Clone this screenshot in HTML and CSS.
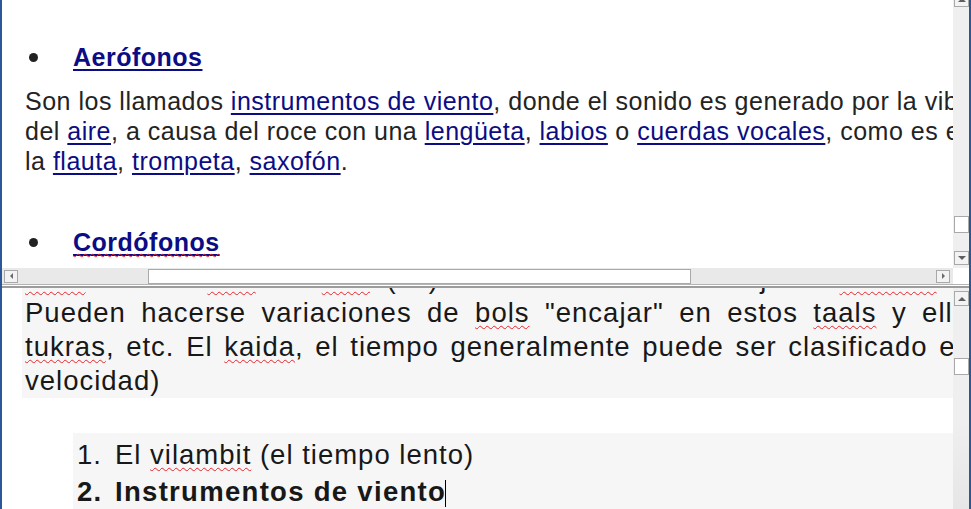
FILE: index.html
```html
<!DOCTYPE html>
<html lang="es">
<head>
<title>Documento - Instrumentos</title>
<meta charset="utf-8">
<meta name="viewport" content="width=device-width, initial-scale=1">
<link rel="stylesheet" href="styles.css">
</head>
<body>

<div class="window">

  <!-- UPPER SPLIT PANE -->
  <div class="pane-top">
    <div class="pane-body">
      <div class="doc doc-top">
        <div class="head"><span class="dot"></span><a class="link">Aerófonos</a></div>
        <div class="para">
          <span class="ln">Son los llamados <a class="link">instrumentos de viento</a>, donde el sonido es generado por la vibración de la columna</span>
          <span class="ln">del <a class="link">aire</a>, a causa del roce con una <a class="link">lengüeta</a>, <a class="link">labios</a> o <a class="link">cuerdas vocales</a>, como es el caso de</span>
          <span class="ln">la <a class="link">flauta</a>, <a class="link">trompeta</a>, <a class="link">saxofón</a>.</span>
        </div>
        <div class="head head-2"><span class="dot"></span><a class="link"><span class="sp sp-link">Cordófonos</span></a></div>
      </div>
      <div class="vscroll vscroll-top">
        <div class="btn btn-up btn-cut"></div>
        <div class="thumb thumb-top"></div>
        <div class="btn btn-down"></div>
      </div>
    </div>
    <div class="hbar">
      <div class="hscroll">
        <div class="btn btn-left"></div>
        <div class="hthumb"></div>
        <div class="btn btn-right"></div>
      </div>
      <div class="corner"></div>
    </div>
  </div>

  <div class="split"></div>

  <!-- LOWER SPLIT PANE -->
  <div class="pane-bottom">
    <div class="doc doc-bottom">
      <div class="para2">
        <span class="ln ws0"><span class="sp">Rela</span> tocado <span class="sp">taal</span> de <span class="sp">tala</span> (tal) en el cual se cada ajusta <span class="sp">Tirakita</span> y ello</span>
        <span class="ln ws1">Pueden hacerse variaciones de <span class="sp">bols</span> "encajar" en estos <span class="sp">taals</span> y ellos son</span>
        <span class="ln ws2"><span class="sp">tukras</span>, etc. El <span class="sp">kaida</span>, el tiempo generalmente puede ser clasificado en</span>
        <span class="ln">velocidad)</span>
      </div>
      <div class="list">
        <div class="item"><span class="num">1.</span>El <span class="sp">vilambit</span> (el tiempo lento)</div>
        <div class="item item-bold"><span class="num">2.</span>Instrumentos de viento<span class="caret"></span></div>
      </div>
    </div>
    <div class="vscroll vscroll-bottom">
      <div class="btn btn-up"></div>
      <div class="thumb thumb-bottom"></div>
    </div>
  </div>

</div>

</body>
</html>
```

FILE: styles.css
```css
* {
  box-sizing: border-box;
}

html, body {
  margin: 0;
  padding: 0;
}

body {
  width: 971px;
  height: 509px;
  overflow: hidden;
  background: #fff;
  font-family: Arial, "Liberation Sans", sans-serif;
}

/* Window frame with the blue edges */
.window {
  height: 509px;
  border-left: 2px solid #2b579a;
  border-right: 2px solid #2b579a;
  display: flex;
  flex-direction: column;
}

/* Upper pane */
.pane-top {
  height: 284px;
  flex: none;
  display: flex;
  flex-direction: column;
}

.pane-body {
  flex: 1;
  min-height: 0;
  display: flex;
}

.doc {
  flex: 1;
  min-width: 0;
  overflow: hidden;
  background: #fff;
}

.ln {
  display: block;
  white-space: nowrap;
}

/* Links in the document */
.link {
  color: #0c0c84;
  text-decoration: underline;
  text-decoration-thickness: 2px;
  text-underline-offset: 3px;
}

/* Spelling squiggle */
.sp {
  text-decoration: underline wavy #e8242a;
  text-decoration-thickness: 1px;
  text-underline-offset: 3px;
}

.sp-link {
  text-underline-offset: 2px;
}

.doc-top {
  padding-top: 42px;
  color: #232323;
  font-size: 25px;
  letter-spacing: 0.5px;
  line-height: 30px;
}

.head {
  display: flex;
  align-items: center;
  padding-left: 27px;
  font-weight: bold;
}

.head-2 {
  margin-top: 51px;
}

.dot {
  width: 9px;
  height: 9px;
  border-radius: 50%;
  background: #222;
  margin-right: 35px;
}

.para {
  margin-top: 14px;
  padding-left: 23px;
}

/* Scrollbars */
.vscroll {
  width: 16px;
  flex: none;
  display: flex;
  flex-direction: column;
  background: #efefef;
}

.btn {
  width: 15px;
  height: 15px;
  margin-left: 1px;
  border: 1px solid #a9a9a9;
  background: #f3f3f3;
  display: flex;
  align-items: center;
  justify-content: center;
  flex: none;
}

.btn::before {
  content: "";
  border: 4px solid transparent;
}

.btn-up::before {
  border-top: 0;
  border-bottom: 4px solid #5e5e5e;
}

.btn-down::before {
  border-bottom: 0;
  border-top: 4px solid #5e5e5e;
}

.btn-left::before {
  border-left: 0;
  border-width: 3px 3px 3px 0;
  border-right: 3px solid #6a6a6a;
}

.btn-right::before {
  border-right: 0;
  border-width: 3px 0 3px 3px;
  border-left: 3px solid #6a6a6a;
}

.btn-cut {
  margin-top: -8px;
}

.thumb {
  width: 15px;
  height: 17px;
  margin-left: 1px;
  border: 1px solid #a9a9a9;
  background: #fff;
  flex: none;
}

.thumb-top {
  margin-top: 209px;
}

.btn-down {
  margin-top: 18px;
  height: 14px;
}

.hbar {
  height: 16px;
  flex: none;
  display: flex;
}

.hscroll {
  flex: 1;
  display: flex;
  align-items: center;
  background: #e9e9e9;
  padding: 0 3px 0 1px;
}

.btn-left, .btn-right {
  width: 14px;
  height: 13px;
}

.hthumb {
  width: 543px;
  height: 15px;
  margin-left: 130px;
  border: 1px solid #a9a9a9;
  background: #fff;
}

.btn-right {
  margin-left: auto;
}

.corner {
  width: 16px;
  background: #fff;
}

/* Divider between the panes */
.split {
  height: 4px;
  flex: none;
  border-top: 1px solid #b4b4b4;
  border-bottom: 2px solid #9c9c9c;
  background: #fff;
}

/* Lower pane */
.pane-bottom {
  flex: 1;
  min-height: 0;
  display: flex;
}

.vscroll-bottom {
  background: linear-gradient(#efefef, #efefef 60%, #e6e6e6);
}

.vscroll-bottom .btn-up {
  margin-top: 3px;
}

.thumb-bottom {
  margin-top: 52px;
}

.doc-bottom {
  color: #181818;
  font-size: 27.5px;
  letter-spacing: 1px;
}

.para2 {
  margin: -26.5px 0 0 20px;
  padding-left: 3px;
  background: #f6f6f6;
  line-height: 34px;
}

.ws0 {
  word-spacing: 8px;
}

.ws1 {
  word-spacing: 6.8px;
}

.ws2 {
  word-spacing: 3px;
}

.list {
  margin: 35px 0 0 71px;
  padding: 3px 0 0 4px;
  background: #f6f6f6;
  line-height: 37px;
}

.num {
  display: inline-block;
  width: 38px;
}

.item-bold {
  font-weight: bold;
  letter-spacing: 1.3px;
}

.caret {
  display: inline-block;
  width: 1px;
  height: 27px;
  margin-left: -1px;
  background: #000;
  vertical-align: -6px;
}
```
